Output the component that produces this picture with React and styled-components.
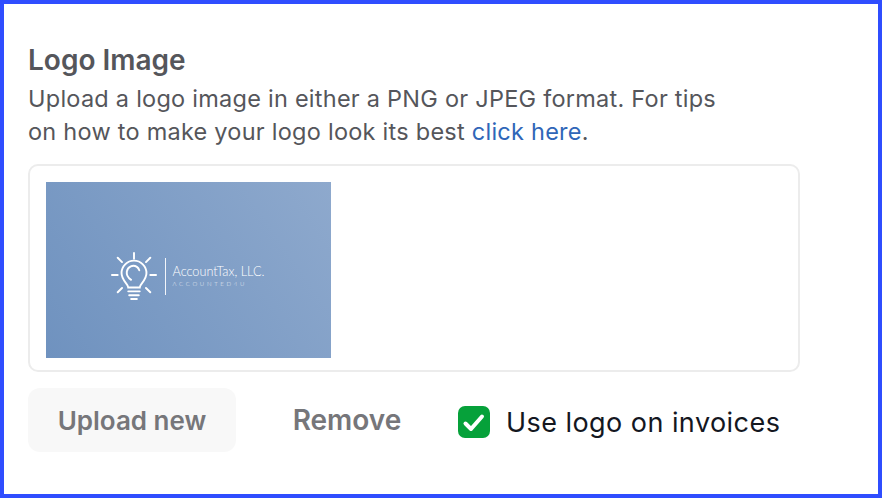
import React from 'react';
import styled, { createGlobalStyle } from 'styled-components';

const GlobalStyle = createGlobalStyle`
    html, body {
        margin: 0;
        padding: 0;
        background: white;
    }
`;

const Frame = styled.div`
    box-sizing: border-box;
    width: 882px;
    height: 498px;
    border: 4px solid #2f4dff;
    padding: 37px 24px 0;
    background: white;
    font-family: Inter, "Liberation Sans", sans-serif;
`;

const Title = styled.h2`
    margin: 0 0 3px;
    font-size: 28px;
    line-height: 38px;
    font-weight: 600;
    color: #55565b;
`;

const Description = styled.p`
    margin: 0;
    width: 700px;
    font-size: 23.500px;
    line-height: 33px;
    font-weight: 400;
    letter-spacing: 0.25px;
    color: #55565b;

    a {
        color: #2f66b8;
        text-decoration: none;
    }
`;

const ImageBox = styled.div`
    box-sizing: border-box;
    width: 772px;
    height: 208px;
    margin-top: 16px;
    padding: 16px;
    border: 2px solid #ececec;
    border-radius: 10px;
`;

const LogoPreview = styled.div`
    box-sizing: border-box;
    width: 285px;
    height: 176px;
    padding-top: 12px;
    display: flex;
    align-items: center;
    justify-content: center;
    background: linear-gradient(55deg, #6f92bf 0%, #8ea9cd 100%);
    color: white;
`;

const Divider = styled.div`
    width: 1px;
    height: 37px;
    margin: 0 7px 0 8px;
    background: rgba(255, 255, 255, 0.9);
`;

const LogoText = styled.div`
    display: flex;
    flex-direction: column;
    font-family: Lato, sans-serif;
    font-weight: 300;
    font-size: 12.700px;
    line-height: 15px;
    white-space: nowrap;
    width: 94px;
`;

const LogoSub = styled.span`
    font-size: 6px;
    line-height: 9px;
    letter-spacing: 2.7px;
    opacity: 0.85;
`;

const Actions = styled.div`
    display: flex;
    align-items: center;
    margin-top: 16px;
`;

const Button = styled.button`
    box-sizing: border-box;
    width: ${props => props.$width};
    height: 64px;
    padding: 0;
    border: none;
    border-radius: 12px;
    background: ${props => props.$filled ? '#f8f8f8' : 'transparent'};
    color: #76767a;
    font-family: inherit;
    font-size: ${props => props.$size};
    font-weight: 600;
`;

const CheckLabel = styled.label`
    display: flex;
    align-items: center;
    gap: 16px;
    padding-top: 4px;
    font-size: 27px;
    letter-spacing: 0.45px;
    color: #14171f;
`;

const CheckBox = styled.span`
    width: 32px;
    height: 32px;
    border-radius: 7px;
    background: #06a13a;
    display: flex;
    align-items: center;
    justify-content: center;
`;

function BulbIcon() {
    return (
        <svg width="46" height="48" viewBox="0 0 48 50" fill="none" stroke="white" strokeWidth="2" strokeLinecap="round">
            <path d="M24 1v6M7 6l4.500 4.500M41 6l-4.500 4.500M1 24h6M41 24h6M11.500 37.500L7 42M36.500 37.500L41 42" />
            <path d="M18 37c0-4-7-7-7-15a13 13 0 0 1 26 0c0 8-7 11-7 15z" />
            <path d="M21 29c-3-2-5-5-4.500-8.500C17.500 15 23 13 27 15.500c1.500 1 2 2 2.500 3.500" />
            <path d="M18 41h12M19 45h10M21 49h6" />
        </svg>
    );
}

function App() {
    return (
        <Frame>
            <GlobalStyle />
            <Title>Logo Image</Title>
            <Description>
                Upload a logo image in either a PNG or JPEG format. For tips on how to make your logo look its best <a href="#tips">click here</a>.
            </Description>
            <ImageBox>
                <LogoPreview>
                    <BulbIcon />
                    <Divider />
                    <LogoText>
                        AccountTax, LLC.
                        <LogoSub>ACCOUNTED4U</LogoSub>
                    </LogoText>
                </LogoPreview>
            </ImageBox>
            <Actions>
                <Button $filled $width="208px" $size="26px">Upload new</Button>
                <Button $width="222px" $size="28px">Remove</Button>
                <CheckLabel>
                    <CheckBox>
                        <svg width="24" height="24" viewBox="0 0 24 24" fill="none" stroke="white" strokeWidth="4" strokeLinecap="round" strokeLinejoin="round">
                            <path d="M3.500 13.500L9 19L20 6.500" />
                        </svg>
                    </CheckBox>
                    Use logo on invoices
                </CheckLabel>
            </Actions>
        </Frame>
    );
}

export default App;
